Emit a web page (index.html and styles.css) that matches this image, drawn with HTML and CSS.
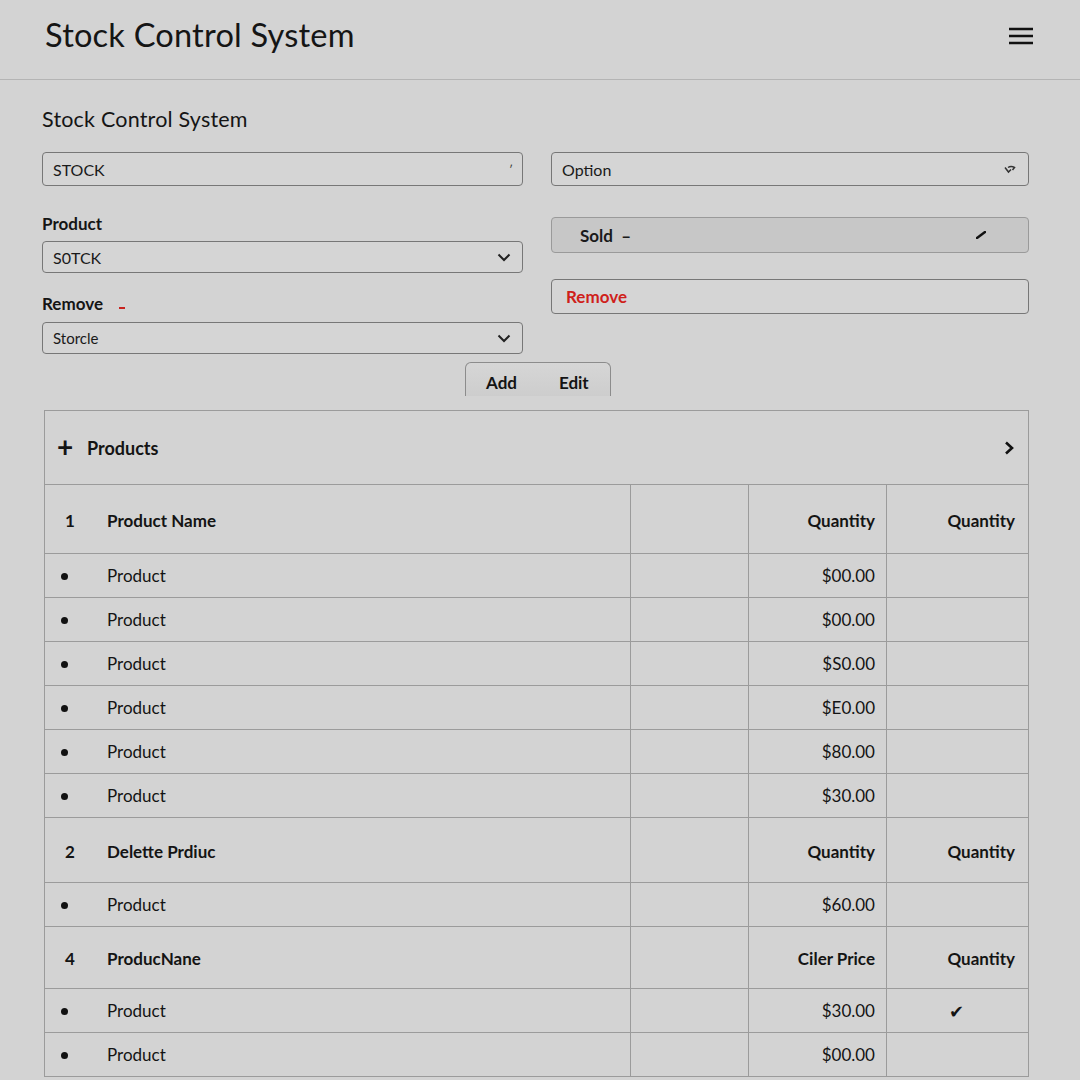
FILE: index.html
```html
<!DOCTYPE html>
<html>
<head>
<meta charset="utf-8">
<link rel="stylesheet" href="styles.css">
</head>
<body>
<header class="topbar">
  <h1 class="app-title">Stock Control System</h1>
  <button class="menu-btn" aria-label="menu">
    <svg width="26" height="18" viewBox="0 0 26 18"><path d="M1 2H25M1 9H25M1 16H25" stroke="#111" stroke-width="2.6" stroke-linecap="butt"/></svg>
  </button>
</header>
<main class="main">
  <h2 class="section-title">Stock Control System</h2>
  <div class="form">
    <div class="col col-left">
      <div class="field first">
        <span>STOCK</span>
        <span class="tick-small">&#x2032;</span>
      </div>
      <label class="lbl lbl-product">Product</label>
      <div class="field sel">
        <span>S0TCK</span>
        <svg class="chev" width="14" height="9" viewBox="0 0 14 9"><path d="M1.5 1.5L7 7L12.5 1.5" fill="none" stroke="#222" stroke-width="2"/></svg>
      </div>
      <label class="lbl lbl-remove">Remove <span class="red-dash"></span></label>
      <div class="field sel small-text">
        <span>Storcle</span>
        <svg class="chev" width="14" height="9" viewBox="0 0 14 9"><path d="M1.5 1.5L7 7L12.5 1.5" fill="none" stroke="#222" stroke-width="2"/></svg>
      </div>
    </div>
    <div class="col col-right">
      <div class="field first">
        <span>Option</span>
        <svg class="opt-icon" width="12" height="9" viewBox="0 0 12 9"><path d="M1 2.5L4.5 7L7 4.5M4 2.5Q7 0.5 10.5 2.5L8.5 5" fill="none" stroke="#333" stroke-width="1.5"/></svg>
      </div>
      <div class="field sold">
        <span class="sold-text">Sold &nbsp;&#x2013;</span>
        <svg class="sold-tick" width="10" height="8" viewBox="0 0 10 8"><path d="M1 7L9 1" stroke="#111" stroke-width="2.4" stroke-linecap="round"/></svg>
      </div>
      <div class="field remove">
        <span class="remove-text">Remove</span>
      </div>
    </div>
  </div>
  <div class="tabs">
    <div class="tab-group">
      <span class="tab">Add</span>
      <span class="tab">Edit</span>
    </div>
  </div>
  <table class="grid">
    <colgroup>
      <col class="c1"><col class="c2"><col class="c3"><col class="c4">
    </colgroup>
    <tr class="top-row">
      <td colspan="4">
        <div class="top-inner">
          <span class="plus">+</span>
          <span class="top-title">Products</span>
          <svg class="right-chev" width="10" height="14" viewBox="0 0 10 14"><path d="M2 1.5L8 7L2 12.5" fill="none" stroke="#111" stroke-width="2.6"/></svg>
        </div>
      </td>
    </tr>
    <tr class="group g1">
      <td class="name"><span class="num">1</span>Product Name</td><td></td><td class="r">Quantity</td><td class="r">Quantity</td>
    </tr>
    <tr class="item"><td class="name"><span class="dot"></span>Product</td><td></td><td class="r">$00.00</td><td></td></tr>
    <tr class="item"><td class="name"><span class="dot"></span>Product</td><td></td><td class="r">$00.00</td><td></td></tr>
    <tr class="item"><td class="name"><span class="dot"></span>Product</td><td></td><td class="r">$S0.00</td><td></td></tr>
    <tr class="item"><td class="name"><span class="dot"></span>Product</td><td></td><td class="r">$E0.00</td><td></td></tr>
    <tr class="item"><td class="name"><span class="dot"></span>Product</td><td></td><td class="r">$80.00</td><td></td></tr>
    <tr class="item"><td class="name"><span class="dot"></span>Product</td><td></td><td class="r">$30.00</td><td></td></tr>
    <tr class="group g2">
      <td class="name"><span class="num">2</span>Delette Prdiuc</td><td></td><td class="r">Quantity</td><td class="r">Quantity</td>
    </tr>
    <tr class="item"><td class="name"><span class="dot"></span>Product</td><td></td><td class="r">$60.00</td><td></td></tr>
    <tr class="group g3">
      <td class="name"><span class="num">4</span>ProducNane</td><td></td><td class="r">Ciler Price</td><td class="r">Quantity</td>
    </tr>
    <tr class="item"><td class="name"><span class="dot"></span>Product</td><td></td><td class="r">$30.00</td><td class="check-cell">&#x2714;</td></tr>
    <tr class="item"><td class="name"><span class="dot"></span>Product</td><td></td><td class="r">$00.00</td><td></td></tr>
  </table>
</main>
</body>
</html>
```

FILE: styles.css
```css
* { box-sizing: border-box; }
html, body { margin: 0; padding: 0; }
body {
  background: #d3d3d3;
  font-family: "Lato", "Open Sans", sans-serif;
  color: #141414;
  width: 1080px;
  height: 1080px;
  overflow: hidden;
}
.topbar {
  height: 80px;
  border-bottom: 1px solid #b4b4b4;
  display: flex;
  align-items: center;
  justify-content: space-between;
  padding: 0 46px 0 45px;
}
.app-title {
  margin: 0;
  font-size: 32.6px;
  font-weight: 400;
  letter-spacing: 0.2px;
  color: #151515;
  position: relative;
  top: -5px;
}
.menu-btn {
  background: none;
  border: none;
  padding: 0;
  display: flex;
  position: relative;
  top: -4px;
}
.main {
  padding: 26px 51px 0 42px;
}
.section-title {
  margin: 0;
  font-size: 21.5px;
  font-weight: 400;
  line-height: 26px;
  letter-spacing: 0.2px;
  color: #151515;
}
.form {
  display: flex;
  gap: 28px;
  margin-top: 20px;
}
.col { display: flex; flex-direction: column; }
.col-left { width: 481px; }
.col-right { width: 478px; }
.field {
  border: 1px solid #777;
  border-radius: 4px;
  display: flex;
  align-items: center;
  justify-content: space-between;
  padding: 0 9px 0 10px;
  font-size: 16px;
  color: #1a1a1a;
  background: #d5d5d5;
}
.field.first { height: 34px; }
.field.sel { height: 32px; padding-right: 11px; }
.field.small-text span { font-size: 15px; }
.tick-small { font-size: 12px; color: #333; }
.lbl {
  font-size: 17px;
  font-weight: 700;
  line-height: 20px;
  height: 20px;
  color: #151515;
}
.lbl-product { margin-top: 28px; margin-bottom: 7px; }
.lbl-remove { margin-top: 21px; margin-bottom: 8px; }
.red-dash {
  display: inline-block;
  width: 6px;
  height: 2px;
  background: #c8231f;
  margin-left: 12px;
  vertical-align: middle;
  position: relative;
  top: 2px;
}
.col-right .field.first { padding-right: 12px; }
.field.sold {
  margin-top: 31px;
  height: 36px;
  background: #c7c7c7;
  border-color: #9a9a9a;
  padding: 0 42px 0 28px;
}
.sold-text { font-size: 17px; font-weight: 700; }
.field.remove {
  margin-top: 26px;
  height: 35px;
  padding-left: 14px;
}
.remove-text { color: #cf1f1b; font-weight: 700; font-size: 17px; }
.tabs {
  display: flex;
  justify-content: flex-start;
  margin-top: 8px;
  padding-left: 423px;
}
.tab-group {
  width: 146px;
  height: 34px;
  border: 1px solid #8c8c8c;
  border-bottom: none;
  border-radius: 6px 6px 0 0;
  background: linear-gradient(#d6d6d6, #cdcdcd);
  display: flex;
  align-items: center;
  padding: 5px 0 0 20px;
  gap: 42px;
}
.tab { font-size: 17px; font-weight: 700; }
.grid {
  margin-top: 14px;
  margin-left: 2px;
  width: 984px;
  border-collapse: collapse;
  table-layout: fixed;
  font-size: 17px;
}
.c1 { width: 586px; }
.c2 { width: 118px; }
.c3 { width: 138px; }
.c4 { width: 142px; }
.grid td {
  border: 1px solid #9b9b9b;
  padding: 0;
  vertical-align: middle;
}
.top-row td { height: 74px; }
.top-inner {
  display: flex;
  align-items: center;
  padding: 0 12px 0 12px;
}
.plus { font-size: 28px; font-weight: 700; line-height: 1; width: 30px; position: relative; top: -2px; }
.top-title { font-weight: 700; font-size: 18px; flex: 1; }
.right-chev { margin-right: 2px; }
.group td { font-weight: 700; }
.g1 td { height: 69px; padding-top: 2px; }
.g2 td { height: 65px; padding-top: 2px; }
.g3 td { height: 62px; padding-top: 2px; }
.item td { height: 44px; }
.name { padding-left: 16px !important; }
.num { display: inline-block; width: 46px; padding-left: 4px; }
.dot {
  display: inline-block;
  width: 7px; height: 7px;
  border-radius: 50%;
  background: #111;
  margin: 0 39px 2px 0;
  vertical-align: middle;
}
.r { text-align: right; padding-right: 11px !important; }
.group .r:last-child { padding-right: 13px !important; }
.check-cell { padding-left: 62px !important; font-size: 18px; }
```
